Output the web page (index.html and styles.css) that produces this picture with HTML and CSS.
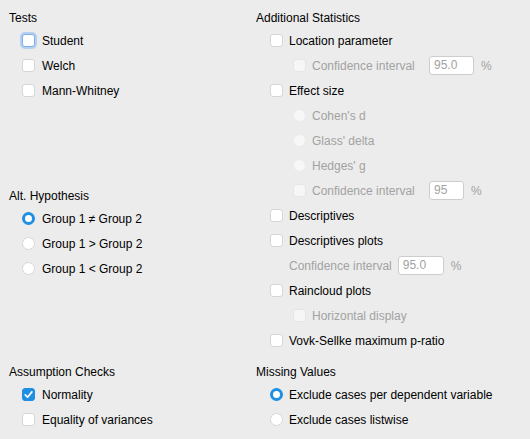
FILE: index.html
```html
<!DOCTYPE html>
<html>
<head>
<meta charset="utf-8">
<link rel="stylesheet" href="styles.css">
</head>
<body>
<div class="panel">
  <div class="col col-left">
    <div class="section">
      <div class="hdr">Tests</div>
      <div class="row"><span class="cb focus"></span><span class="lbl">Student</span></div>
      <div class="row"><span class="cb"></span><span class="lbl">Welch</span></div>
      <div class="row"><span class="cb"></span><span class="lbl">Mann-Whitney</span></div>
    </div>
    <div class="section alt">
      <div class="hdr">Alt. Hypothesis</div>
      <div class="row"><span class="rb on"></span><span class="lbl">Group 1 ≠ Group 2</span></div>
      <div class="row"><span class="rb"></span><span class="lbl">Group 1 &gt; Group 2</span></div>
      <div class="row"><span class="rb"></span><span class="lbl">Group 1 &lt; Group 2</span></div>
    </div>
  </div>
  <div class="col col-right">
    <div class="section">
      <div class="hdr">Additional Statistics</div>
      <div class="row"><span class="cb"></span><span class="lbl">Location parameter</span></div>
      <div class="row sub"><span class="cb dis"></span><span class="lbl dim fixed">Confidence interval</span><span class="inp w44">95.0</span><span class="pct">%</span></div>
      <div class="row"><span class="cb"></span><span class="lbl">Effect size</span></div>
      <div class="row sub"><span class="rb dis"></span><span class="lbl dim">Cohen's d</span></div>
      <div class="row sub"><span class="rb dis"></span><span class="lbl dim">Glass' delta</span></div>
      <div class="row sub"><span class="rb dis"></span><span class="lbl dim">Hedges' g</span></div>
      <div class="row sub"><span class="cb dis"></span><span class="lbl dim fixed">Confidence interval</span><span class="inp w35">95</span><span class="pct">%</span></div>
      <div class="row"><span class="cb"></span><span class="lbl">Descriptives</span></div>
      <div class="row"><span class="cb"></span><span class="lbl">Descriptives plots</span></div>
      <div class="row textsub"><span class="lbl dim">Confidence interval</span><span class="inp w46 near">95.0</span><span class="pct">%</span></div>
      <div class="row"><span class="cb"></span><span class="lbl">Raincloud plots</span></div>
      <div class="row sub"><span class="cb dis"></span><span class="lbl dim">Horizontal display</span></div>
      <div class="row"><span class="cb"></span><span class="lbl">Vovk-Sellke maximum p-ratio</span></div>
    </div>
  </div>
  <div class="col col-left bottom">
    <div class="section">
      <div class="hdr">Assumption Checks</div>
      <div class="row"><span class="cb on"><svg viewBox="0 0 13 13" width="13" height="13"><path d="M3.2 6.8 L5.6 9.2 L9.9 3.9" fill="none" stroke="#fff" stroke-width="1.7" stroke-linecap="round" stroke-linejoin="round"/></svg></span><span class="lbl">Normality</span></div>
      <div class="row"><span class="cb"></span><span class="lbl">Equality of variances</span></div>
    </div>
  </div>
  <div class="col col-right bottom">
    <div class="section">
      <div class="hdr">Missing Values</div>
      <div class="row"><span class="rb on"></span><span class="lbl">Exclude cases per dependent variable</span></div>
      <div class="row"><span class="rb"></span><span class="lbl">Exclude cases listwise</span></div>
    </div>
  </div>
</div>
</body>
</html>
```
FILE: styles.css
```css
html, body {
  margin: 0;
  padding: 0;
  background: #ececec;
}
body {
  font-family: "Liberation Sans", Arial, sans-serif;
  font-size: 12px;
  color: #000;
  width: 530px;
  height: 439px;
  overflow: hidden;
}
.panel {
  display: grid;
  grid-template-columns: 247px 1fr;
  padding: 8px 0 0 9px;
}
.bottom {
  margin-top: 9px;
}
.alt {
  margin-top: 83px;
}
.hdr {
  height: 20px;
  line-height: 20px;
}
.row {
  height: 25px;
  display: flex;
  align-items: center;
  padding-left: 13px;
}
.col-right .row {
  padding-left: 14px;
}
.col-right .row.sub {
  padding-left: 37px;
}
.col-right .row.textsub {
  padding-left: 33px;
}
.lbl {
  margin-left: 7px;
  white-space: nowrap;
}
.col-right .lbl {
  margin-left: 6px;
}
.col-right .textsub .lbl {
  margin-left: 0;
}
.lbl.fixed {
  width: 117px;
}
.dim {
  color: #a2a2a2;
}
.cb {
  width: 13px;
  height: 13px;
  box-sizing: border-box;
  background: #fff;
  border: 1px solid #d6d6d6;
  border-radius: 3px;
  flex: none;
  display: flex;
}
.cb.focus {
  border: 1px solid #7faee8;
  box-shadow: 0 0 0 2px #b3cff1;
}
.cb.dis {
  background: #f6f6f6;
  border-color: #e6e6e6;
}
.cb.on {
  background: #1f8fe3;
  border-color: #1f8fe3;
}
.cb.on svg {
  margin: -1px;
}
.rb {
  width: 13px;
  height: 13px;
  box-sizing: border-box;
  border-radius: 50%;
  background: #fff;
  border: 1px solid #d8d8d8;
  flex: none;
}
.rb.on {
  border: 3.5px solid #1f8fe3;
}
.rb.dis {
  background: #f7f7f7;
  border-color: #ececec;
}
.inp {
  height: 19px;
  box-sizing: border-box;
  background: #fff;
  border: 1px solid #cdcdcd;
  border-radius: 3px;
  color: #a2a2a2;
  line-height: 17px;
  padding-left: 4px;
  flex: none;
}
.inp.near {
  margin-left: 6px;
}
.w44 { width: 45px; }
.w35 { width: 35px; }
.w46 { width: 46px; }
.pct {
  color: #a2a2a2;
  margin-left: 7px;
}
```
